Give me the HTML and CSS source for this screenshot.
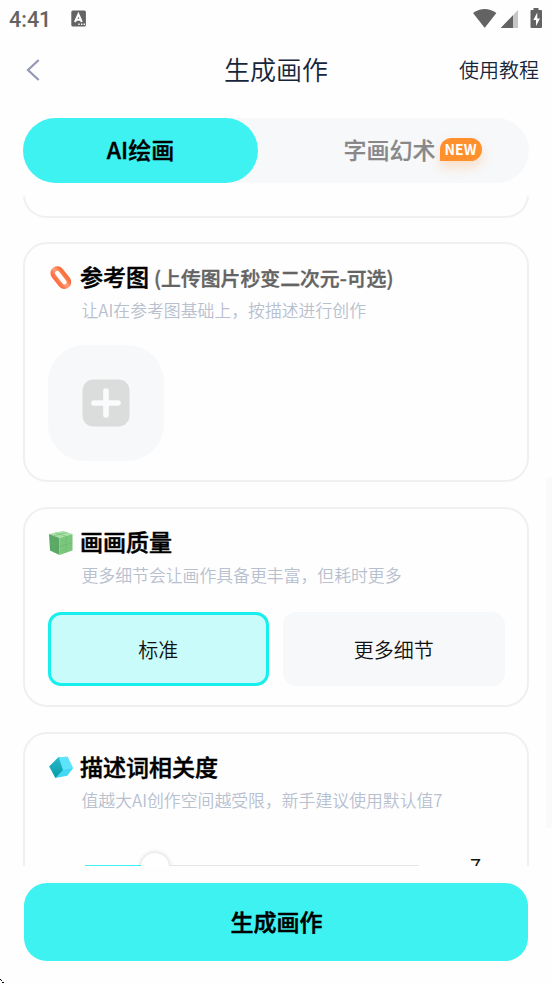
FILE: index.html
```
<!DOCTYPE html>
<html lang="zh-CN">
<head>
<meta charset="utf-8">
<title>生成画作</title>
<link rel="stylesheet" href="styles.css">
</head>
<body>
<div class="screen">
  <div class="status">
    <span class="clock">4:41</span>
    <svg class="ime" width="16" height="17" viewBox="0 0 16 17"><rect x=".3" y=".5" width="14.6" height="16" rx="1.6" fill="#636363"/><path d="M4 12 7.4 4.2 10.8 12M5.2 9.7h4.4" fill="none" stroke="#fff" stroke-width="2"/><path d="M7.3 14.3h1.4M10 14.3h1.4M12.6 14.3H14" stroke="#fff" stroke-width="1.4"/></svg>
    <svg class="signals" width="72" height="22" viewBox="0 0 72 22"><path d="M1 5Q12.700-3 24.400 5L13 19.500Q12.700 19.800 12.400 19.500Z" fill="#636363"/><path d="M46 2v18H29Z" fill="#c6c6c6"/><path d="M41 7.200V20H28.700Z" fill="#636363"/><path d="M61.500 2V0h5v2H69q1 0 1 1v16q0 1-1 1H59.500q-1 0-1-1V3q0-1 1-1Z" fill="#636363"/><path d="M65.300 4.500 61.300 12H64v6l4-7.500h-2.700Z" fill="#fff"/></svg>
  </div>
  <header class="header">
    <svg class="back" width="16" height="24" viewBox="0 0 16 24"><path d="M13.700 2 3 12l10.700 10" fill="none" stroke="#9497b5" stroke-width="2.200"/></svg>
    <h1 class="title">生成画作</h1>
    <span class="help">使用教程</span>
  </header>
  <nav class="tabs">
    <div class="tab active">AI绘画</div>
    <div class="tab idle"><span>字画幻术</span><span class="new">NEW</span></div>
  </nav>
  <main class="content">
    <section class="card previous"></section>
    <section class="card reference">
      <div class="heading">
        <svg class="icon" width="26" height="26" viewBox="0 0 26 26"><defs><linearGradient id="coral" x1="0" y1="0" x2="1" y2="0"><stop offset="0" stop-color="#ff7145"/><stop offset=".5" stop-color="#ffa17c"/><stop offset="1" stop-color="#f9713f"/></linearGradient></defs><rect x="8.100" y="2.300" width="9.200" height="20.600" rx="4.600" transform="rotate(-38 12.800 12.400)" fill="none" stroke="url(#coral)" stroke-width="4.600"/></svg>
        <h2>参考图</h2><span class="note">(上传图片秒变二次元-可选)</span>
      </div>
      <p class="desc">让AI在参考图基础上，按描述进行创作</p>
      <div class="upload"><svg width="48" height="48" viewBox="0 0 48 48"><rect x=".5" y=".5" width="47" height="47" rx="11" fill="#dbdddc"/><path d="M24 12v24M12 24h24" stroke="#fafbfc" stroke-width="5.600" stroke-linecap="round"/></svg></div>
    </section>
    <section class="card quality">
      <div class="heading">
        <svg class="icon" width="26" height="26" viewBox="0 0 26 26"><path d="m1 4 14-3 9.500 3-13 4Z" fill="#a9dfa4"/><path d="m1 4 10.500 4v17L2 20.500Z" fill="#5ba764"/><path d="m11.500 8 13-4v16.500l-13 4.500Z" fill="#79c67c"/><path d="m7 2.700 11 3.500v16.500M18.800 2.500 6 5.800v16.700M1.500 12.500l10 4 13-4" fill="none" stroke="#65b56c" stroke-width=".5"/></svg>
        <h2>画画质量</h2>
      </div>
      <p class="desc">更多细节会让画作具备更丰富，但耗时更多</p>
      <div class="options"><div class="option selected">标准</div><div class="option">更多细节</div></div>
    </section>
    <section class="card relevance">
      <div class="heading">
        <svg class="icon" width="26" height="26" viewBox="0 0 26 26"><defs><linearGradient id="teal" x1="0" y1="0" x2="0" y2="1"><stop offset="0" stop-color="#29b9ca"/><stop offset="1" stop-color="#069ba6"/></linearGradient></defs><path d="M10.500 3.200 19.500 2.700 25 14.300 19.300 21.800 7.500 24 1.500 12.500Z" fill="#42d8f3"/><path d="m10.500 3.200 9-.5L25 14.300l-10 1.700Z" fill="#5ce4fc"/><path d="M10.500 3.200 15 16 7.500 24 1.200 12.500Z" fill="url(#teal)"/></svg>
        <h2>描述词相关度</h2>
      </div>
      <p class="desc">值越大AI创作空间越受限，新手建议使用默认值7</p>
      <div class="slider-row"><div class="track"><div class="filled"></div><div class="thumb"></div><div class="rest"></div></div><span class="value">7</span></div>
    </section>
  </main>
  <footer class="footer"><button class="generate">生成画作</button></footer>
  <svg class="corner" width="4" height="4" viewBox="0 0 4 4" shape-rendering="crispEdges"><path d="M0 0h1v1H0zM1 1h1v1H1zM2 3h2v1H2z" fill="#000"/></svg>
  <div class="scrollbar"></div>
</div>
</body>
</html>
```
FILE: styles.css
```
* { box-sizing: border-box; }
body { margin: 0; background: #fff; font-family: "Noto Sans CJK SC", sans-serif; }
h1, h2, p { margin: 0; }
svg { display: block; flex: none; }
.screen { position: relative; width: 552px; height: 983px; overflow: hidden; background: #fefefe; display: flex; flex-direction: column; }
.status { height: 38px; padding: 0 8px 0 9px; display: flex; align-items: center; }
.clock { width: 62px; padding-top: 2px; font: 500 21.500px/38px Roboto, sans-serif; color: #636363; }
.ime { margin-bottom: 1px; }
.signals { margin-left: auto; margin-bottom: 1px; }
.header { height: 64px; padding: 0 13px 0 25px; display: grid; grid-template-columns: 1fr auto 1fr; align-items: center; color: #17253a; }
.title { font-size: 26px; line-height: 38px; font-weight: 350; margin-right: 12px; margin-bottom: 2px; }
.help { justify-self: end; font-size: 20px; line-height: 30px; font-weight: 350; }
.tabs { height: 65px; margin: 16px 23px 0; border-radius: 33px; background: #f7f8fa; display: flex; font-size: 23px; font-weight: 500; }
.tab { display: flex; align-items: center; justify-content: center; padding-bottom: 3px; }
.tab.active { width: 235px; border-radius: 33px; background: #3df2f1; color: #000; -webkit-text-stroke: .4px #000; }
.tab.idle { flex: 1; gap: 4px; padding-left: 38px; color: #888; -webkit-text-stroke: .2px #888; }
.new { width: 42px; height: 23px; border-radius: 12px 12px 12px 0; background: #ff902e; box-shadow: 0 6px 12px rgba(255, 144, 46, .25); color: #fff; font-size: 14px; line-height: 23px; font-weight: 700; text-align: center; -webkit-text-stroke: 0; }
.content { height: 670px; margin-top: 13px; padding: 0 23px; overflow: hidden; display: flex; flex-direction: column; gap: 25px; }
.card { flex: none; border: 2px solid #f0f0f0; border-radius: 24px; padding: 17px 23px 0; }
.previous { height: 47px; margin-top: -25px; padding: 0; }
.reference { height: 240px; margin-top: -.6px; }
.quality { height: 200px; margin-top: -.3px; }
.relevance { height: 190px; margin-top: -.2px; }
.heading { height: 34px; display: flex; align-items: center; }
.icon { margin-right: 6px; margin-bottom: 1px; }
h2 { font-size: 23px; line-height: 34px; font-weight: 500; color: #000; margin-bottom: 4px; -webkit-text-stroke: .5px #000; }
.note { margin-left: 5px; font-size: 19.850px; line-height: 34px; font-weight: 500; color: #636363; -webkit-text-stroke: .4px #636363; }
.desc { padding-left: 33.500px; margin-top: 2px; font-size: 16.850px; line-height: 26px; font-weight: 350; color: #b7c0ce; white-space: nowrap; }
.upload { width: 116px; height: 116px; margin-top: 21.500px; border-radius: 37px; background: #f7f8fa; display: flex; align-items: center; justify-content: center; }
.options { display: grid; grid-template-columns: 1fr 1fr; gap: 14px; margin: 24px -.5px 0; }
.option { height: 74px; border-radius: 13px; background: #f7f8fa; color: #111; font-size: 20px; font-weight: 350; display: flex; align-items: center; justify-content: center; }
.option.selected { border: 3px solid #16efee; background: #c9fbfa; }
.slider-row { display: flex; align-items: center; height: 34px; margin-top: 37px; padding-left: 37px; }
.track { display: flex; align-items: center; width: 334px; }
.filled { width: 56px; height: 2px; margin-bottom: 1px; background: #3df2f1; }
.thumb { width: 28px; height: 28px; border-radius: 50%; background: #fff; box-shadow: 0 0 5px rgba(0, 0, 0, .2); }
.rest { flex: 1; height: 2px; margin-bottom: 1px; background: #e5e5e5; }
.value { margin-left: 51px; margin-bottom: 2px; font-size: 20px; color: #111; }
.footer { padding: 17px 24px 0; }
.generate { display: block; width: 504px; height: 78px; padding: 0 0 2px 1px; border: 0; border-radius: 23px; background: #3df2f1; color: #000; font: 500 23px/76px "Noto Sans CJK SC", sans-serif; -webkit-text-stroke: .5px #000; }
.corner { position: absolute; left: 0; bottom: 0; }
.scrollbar { position: absolute; right: 0; top: 478px; width: 6px; height: 350px; background: #fafafa; }
```
